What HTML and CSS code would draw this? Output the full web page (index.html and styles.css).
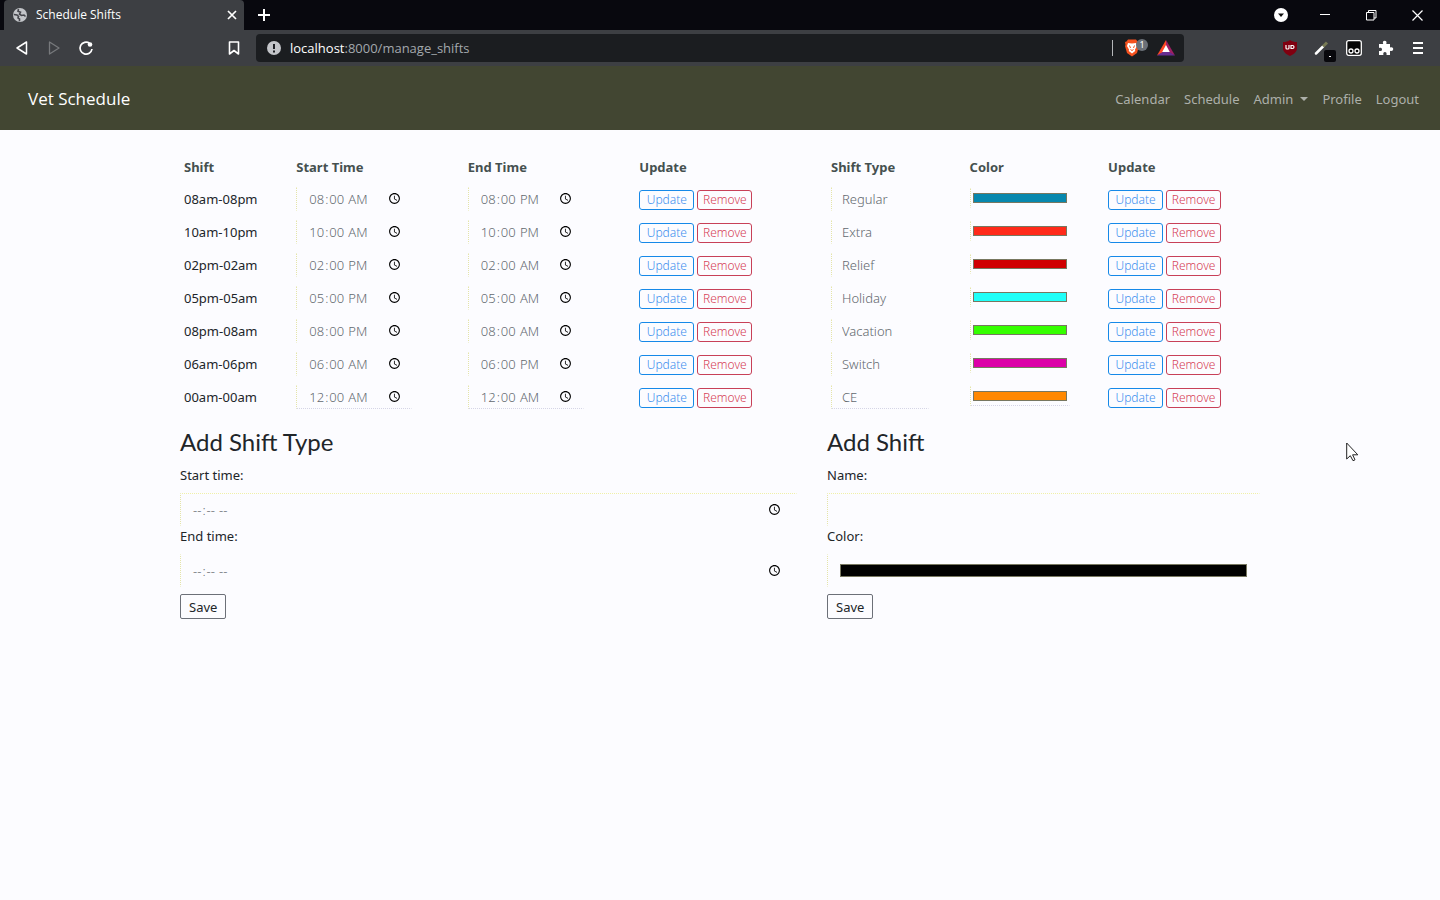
FILE: index.html
```html
<!DOCTYPE html>
<html lang="en">
<head>
<meta charset="utf-8">
<title>Schedule Shifts</title>
<link rel="stylesheet" href="styles.css">
</head>
<body>
<header class="browser">
  <div class="tabstrip">
    <div class="tab">
      <svg class="globe" width="14" height="14" viewBox="0 0 14 14"><circle cx="7" cy="7" r="7" fill="#c3c5c9"/><path d="M.8 6.500L4 7l1.500 1.500L5 10l1.500 1v2.200M5.500 1L5 3.200l2.500 1-1 2 2 1.300 2.500-.5 1.500 1.500" fill="none" stroke="#45464c" stroke-width="1.600"/></svg>
      <span class="tab-title">Schedule Shifts</span>
      <button class="icon" aria-label="Close tab"><svg width="10" height="10" viewBox="0 0 10 10"><path d="M1 1l8 8M9 1L1 9" stroke="#fff" stroke-width="1.700"/></svg></button>
    </div>
    <button class="icon new-tab" aria-label="New tab"><svg width="12" height="12" viewBox="0 0 12 12"><path d="M6 0v12M0 6h12" stroke="#fff" stroke-width="2"/></svg></button>
    <div class="window-controls">
      <button class="icon" aria-label="Search tabs"><svg width="14" height="14" viewBox="0 0 14 14"><circle cx="7" cy="7" r="7" fill="#fff"/><path d="M4 5.500h6L7 9z" fill="#111"/></svg></button>
      <button class="icon" aria-label="Minimize"><svg width="10" height="10" viewBox="0 0 10 10"><path d="M0 4.500h10" stroke="#fff"/></svg></button>
      <button class="icon" aria-label="Restore"><svg width="11" height="11" viewBox="0 0 11 11"><path d="M.5 2.500h7.500v7.500H.5zM2.500 2.500V.5h7.500v7.500H8" fill="none" stroke="#fff"/></svg></button>
      <button class="icon" aria-label="Close"><svg width="11" height="11" viewBox="0 0 11 11"><path d="M.5 .5l10 10M10.500 .5l-10 10" stroke="#fff" stroke-width="1.200"/></svg></button>
    </div>
  </div>
  <div class="toolbar">
    <div class="toolbar-left">
      <button class="icon" aria-label="Back"><svg width="14" height="16" viewBox="0 0 14 16"><path d="M11.500 2v12L2 8z" fill="none" stroke="#fff" stroke-width="1.500" stroke-linejoin="round"/></svg></button>
      <button class="icon" aria-label="Forward"><svg width="14" height="16" viewBox="0 0 14 16"><path d="M2.500 2v12L12 8z" fill="none" stroke="#77797c" stroke-width="1.300" stroke-linejoin="round"/></svg></button>
      <button class="icon" aria-label="Reload"><svg width="16" height="16" viewBox="0 0 16 16"><path d="M14 9A6 6 0 1 1 11.500 3.200" fill="none" stroke="#fff" stroke-width="1.700"/><circle cx="12" cy="4.500" r="2.300" fill="#fff"/></svg></button>
      <button class="icon bookmark" aria-label="Bookmark"><svg width="12" height="16" viewBox="0 0 12 16"><path d="M1.500 2h9v12L6 10.500 1.500 14z" fill="none" stroke="#fff" stroke-width="1.600" stroke-linejoin="round"/></svg></button>
    </div>
    <div class="address">
      <svg width="14" height="14" viewBox="0 0 14 14"><circle cx="7" cy="7" r="7" fill="#c3c5c9"/><path d="M7 3v5M7 9.500v2" stroke="#1c1e22" stroke-width="2"/></svg>
      <span class="url"><b>localhost</b>:8000/manage_shifts</span>
      <span class="divider"></span>
      <span class="shield">
        <svg width="16" height="18" viewBox="0 0 16 18"><path d="M4 .5h8l1.500 2 1.500.5-.5 3 .5 1-2 7L8 17.500 3 14 1 7l.5-1L1 3l1.500-.5z" fill="#f5511e"/><path d="M4 4l4 .6L12 4l1 3-2 3.500.2 1.500L8 14.500 4.800 12 5 10.500 3 7z" fill="#fff"/><path d="M5.500 6.500L6.500 9M10.500 6.500L9.500 9M6.500 10.500L8 11.500l1.500-1" stroke="#f5511e" fill="none"/></svg>
        <span class="count">1</span>
      </span>
      <svg width="18" height="16" viewBox="0 0 18 16"><path d="M9 0L0 15.500l9-4.500z" fill="#ff4724"/><path d="M9 0l9 15.500L9 11z" fill="#9e1f63"/><path d="M0 15.500h18L9 10z" fill="#662d91"/><path d="M9 5l3.800 7H5.200z" fill="#fff"/></svg>
    </div>
    <div class="toolbar-right">
      <button class="icon" aria-label="Blocker"><svg width="14" height="16" viewBox="0 0 14 16"><path d="M7 0c2 1.500 4 2 7 2v6c0 4-3 6-7 8-4-2-7-4-7-8V2c3 0 5-.5 7-2z" fill="#800010"/><path d="M3 5v3q0 1 1 1h1q1 0 1-1V5M8 5.500v3h1.500q1.500 0 1.500-1.500T9.500 5.500z" fill="none" stroke="#fff" stroke-width="1.200"/></svg></button>
      <button class="icon picker" aria-label="Color picker"><svg width="16" height="16" viewBox="0 0 16 16"><path d="M2 13.500L9 6.500" stroke="#fff" stroke-width="2.500" stroke-linecap="round"/><path d="M9 6.500l4-4" stroke="#777a55" stroke-width="3"/></svg><span class="picker-badge"></span></button>
      <button class="icon" aria-label="Extension"><svg width="16" height="16" viewBox="0 0 16 16"><rect x=".7" y=".7" width="14.600" height="14.600" rx="2" fill="#060606" stroke="#fff" stroke-width="1.300"/><g fill="none" stroke="#fff" stroke-width="1.300"><circle cx="5" cy="11" r="2"/><circle cx="11" cy="11" r="2"/></g></svg></button>
      <button class="icon" aria-label="Extensions"><svg width="16" height="16" viewBox="0 0 16 16"><path d="M1 4h4.200C4.300 1.900 5.300.8 6.700.8S9 2 8.300 4H12v3.500c2-.8 3.200 0 3.200 1.500S14 11.400 12 10.700V15H8.500c.5-2-.3-3-1.600-3S5 13 5.400 15H1v-4c2 .4 3-.4 3-1.600S3 7.500 1 8z" fill="#fff"/></svg></button>
      <button class="icon" aria-label="Menu"><svg width="10" height="12" viewBox="0 0 10 12"><path d="M0 1h10M0 6h10M0 11h10" stroke="#fff" stroke-width="2"/></svg></button>
    </div>
  </div>
</header>
<nav class="navbar">
  <a class="brand" href="#">Vet Schedule</a>
  <div class="links">
    <a href="#">Calendar</a><a href="#">Schedule</a><a class="dropdown" href="#">Admin</a><a href="#">Profile</a><a href="#">Logout</a>
  </div>
</nav>
<main class="container">
  <section class="times">
    <table>
      <colgroup><col class="c-shift"><col class="c-start"><col class="c-end"><col class="c-act"></colgroup>
      <thead><tr><th>Shift</th><th>Start Time</th><th>End Time</th><th>Update</th></tr></thead>
      <tbody>
        <tr><td>08am-08pm</td><td><input aria-label="Start time" type="time" value="08:00"></td><td><input aria-label="End time" type="time" value="20:00"></td><td><div class="actions"><button class="btn update">Update</button><button class="btn remove">Remove</button></div></td></tr>
        <tr><td>10am-10pm</td><td><input aria-label="Start time" type="time" value="10:00"></td><td><input aria-label="End time" type="time" value="22:00"></td><td><div class="actions"><button class="btn update">Update</button><button class="btn remove">Remove</button></div></td></tr>
        <tr><td>02pm-02am</td><td><input aria-label="Start time" type="time" value="14:00"></td><td><input aria-label="End time" type="time" value="02:00"></td><td><div class="actions"><button class="btn update">Update</button><button class="btn remove">Remove</button></div></td></tr>
        <tr><td>05pm-05am</td><td><input aria-label="Start time" type="time" value="17:00"></td><td><input aria-label="End time" type="time" value="05:00"></td><td><div class="actions"><button class="btn update">Update</button><button class="btn remove">Remove</button></div></td></tr>
        <tr><td>08pm-08am</td><td><input aria-label="Start time" type="time" value="20:00"></td><td><input aria-label="End time" type="time" value="08:00"></td><td><div class="actions"><button class="btn update">Update</button><button class="btn remove">Remove</button></div></td></tr>
        <tr><td>06am-06pm</td><td><input aria-label="Start time" type="time" value="06:00"></td><td><input aria-label="End time" type="time" value="18:00"></td><td><div class="actions"><button class="btn update">Update</button><button class="btn remove">Remove</button></div></td></tr>
        <tr><td>00am-00am</td><td><input aria-label="Start time" type="time" value="00:00"></td><td><input aria-label="End time" type="time" value="00:00"></td><td><div class="actions"><button class="btn update">Update</button><button class="btn remove">Remove</button></div></td></tr>
      </tbody>
    </table>
    <form>
      <h2>Add Shift Type</h2>
      <label for="start">Start time:</label>
      <input id="start" type="time">
      <label for="end">End time:</label>
      <input id="end" type="time">
      <button class="save" type="button">Save</button>
    </form>
  </section>
  <section class="types">
    <table>
      <colgroup><col class="c-third"><col class="c-third"><col></colgroup>
      <thead><tr><th>Shift Type</th><th>Color</th><th>Update</th></tr></thead>
      <tbody>
        <tr><td><input aria-label="Shift type" type="text" value="Regular"></td><td><input aria-label="Color" type="color" value="#0788ae"></td><td><div class="actions"><button class="btn update">Update</button><button class="btn remove">Remove</button></div></td></tr>
        <tr><td><input aria-label="Shift type" type="text" value="Extra"></td><td><input aria-label="Color" type="color" value="#ff2a1a"></td><td><div class="actions"><button class="btn update">Update</button><button class="btn remove">Remove</button></div></td></tr>
        <tr><td><input aria-label="Shift type" type="text" value="Relief"></td><td><input aria-label="Color" type="color" value="#d00000"></td><td><div class="actions"><button class="btn update">Update</button><button class="btn remove">Remove</button></div></td></tr>
        <tr><td><input aria-label="Shift type" type="text" value="Holiday"></td><td><input aria-label="Color" type="color" value="#20fff8"></td><td><div class="actions"><button class="btn update">Update</button><button class="btn remove">Remove</button></div></td></tr>
        <tr><td><input aria-label="Shift type" type="text" value="Vacation"></td><td><input aria-label="Color" type="color" value="#35ff00"></td><td><div class="actions"><button class="btn update">Update</button><button class="btn remove">Remove</button></div></td></tr>
        <tr><td><input aria-label="Shift type" type="text" value="Switch"></td><td><input aria-label="Color" type="color" value="#dc00a8"></td><td><div class="actions"><button class="btn update">Update</button><button class="btn remove">Remove</button></div></td></tr>
        <tr><td><input aria-label="Shift type" type="text" value="CE"></td><td><input aria-label="Color" type="color" value="#ff8800"></td><td><div class="actions"><button class="btn update">Update</button><button class="btn remove">Remove</button></div></td></tr>
      </tbody>
    </table>
    <form>
      <h2>Add Shift</h2>
      <label for="name">Name:</label>
      <input id="name" type="text">
      <label for="color">Color:</label>
      <input id="color" type="color" value="#000000">
      <button class="save" type="button">Save</button>
    </form>
  </section>
</main>
<svg class="cursor" width="13" height="20" viewBox="0 0 13 20"><path d="M.7 1v16l3.600-3.300 2.700 5 2-.9-2.400-5h5.200z" fill="#fff" stroke="#222" stroke-width="1"/></svg>
</body>
</html>
```
FILE: styles.css
```css
* { box-sizing: border-box; }
body {
  margin: 0;
  min-height: 100vh;
  background: #fcfcff;
  color: #212529;
  font: 13px/20px "Noto Sans", "Open Sans", sans-serif;
}
button, input { font: inherit; }
a { color: inherit; text-decoration: none; }
svg { display: block; flex: none; }
.icon {
  display: flex;
  align-items: center;
  justify-content: center;
  padding: 0;
  border: 0;
  background: none;
}

.tabstrip {
  display: flex;
  align-items: center;
  height: 30px;
  padding-left: 4px;
  background: #08080e;
}
.tab {
  display: flex;
  align-items: center;
  gap: 9px;
  width: 240px;
  height: 30px;
  padding: 0 7px 0 9px;
  border-radius: 4px 4px 0 0;
  background: #3d3f43;
}
.tab-title {
  flex: 1;
  color: #fff;
  font-family: "Open Sans", sans-serif;
  font-size: 12px;
  font-weight: 500;
}
.new-tab { margin-left: 14px; }
.window-controls { display: flex; margin-left: auto; }
.window-controls .icon { width: 46px; height: 30px; }
.window-controls .icon:first-child { width: 42px; }

.toolbar {
  display: flex;
  align-items: center;
  height: 36px;
  background: #3d3f43;
}
.toolbar-left, .toolbar-right {
  display: flex;
  align-items: center;
  width: 256px;
}
.toolbar-left { padding: 0 6px; }
.toolbar .icon { width: 32px; height: 32px; }
.toolbar .bookmark { margin-left: auto; }
.toolbar-right { justify-content: flex-end; padding-right: 6px; }
.picker { position: relative; }
.picker-badge {
  position: absolute;
  right: 2px;
  bottom: 2px;
  width: 12px;
  height: 12px;
  border-radius: 2px;
  background: #08080c;
}
.picker-badge::after {
  content: "";
  position: absolute;
  left: 5px;
  top: 6px;
  width: 2px;
  height: 1px;
  background: #fff;
}
.address {
  display: flex;
  flex: 1;
  align-items: center;
  gap: 9px;
  height: 28px;
  padding: 0 9px 0 11px;
  border-radius: 4px;
  background: #1b1d20;
}
.url { flex: 1; color: #a3a8ad; font-family: "Open Sans", sans-serif; }
.url b { color: #fff; font-weight: 500; }
.divider { width: 1px; height: 16px; background: #b5b7ba; }
.shield { position: relative; width: 26px; padding-left: 2px; }
.count {
  position: absolute;
  right: 0;
  top: 0;
  width: 12px;
  height: 12px;
  border-radius: 6px;
  background: #6b7078;
  color: #fff;
  font-size: 9px;
  line-height: 12px;
  text-align: center;
}

.navbar {
  display: flex;
  align-items: center;
  justify-content: space-between;
  height: 64px;
  padding: 2px 21px 0 28px;
  background: #424632;
}
.brand { color: #fff; font: 17px/24px "Open Sans", sans-serif; }
.links { display: flex; gap: 14px; color: #adb0aa; }
.dropdown { display: flex; align-items: center; gap: 7px; }
.dropdown::after {
  content: "";
  border: 4px solid transparent;
  border-top-color: currentColor;
  border-bottom: 0;
}

.container {
  display: grid;
  grid-template-columns: 617fr 433fr;
  gap: 30px;
  max-width: 1110px;
  margin: 0 auto;
  padding: 21px 15px;
}
table { width: 100%; border-collapse: collapse; table-layout: fixed; }
.c-shift { width: 18.2%; }
.c-start, .c-end { width: 27.8%; }
.c-third { width: 32%; }
th, td { height: 33px; padding: 0 4px; text-align: left; }
th { height: 31px; color: #45504f; font-weight: 700; }
td input { display: block; height: 24px; }
input {
  border: 1px dotted transparent;
  border-left-color: #e4e4a8;
  background: none;
  padding: 0 12px;
  color: #62686e;
}
input[type="time"] { padding: 0 11px; font-weight: 300; }
td input[type="time"] { width: 116px; padding-right: 7px; }
td input[type="text"] { width: 98px; padding: 0 10px; font-weight: 300; }
td input[type="color"] { width: 100px; height: 20px; margin-bottom: 2px; padding: 0; }
input::-webkit-color-swatch-wrapper { padding: 4px 2px; }
input::-webkit-color-swatch { border: 1px solid #777760; }
tbody tr:last-child input { border-bottom-color: #d5d5e6; }
.actions { display: flex; gap: 3px; padding-top: 3px; }
.btn {
  width: 55px;
  height: 20px;
  padding: 0;
  border: 1px solid;
  border-radius: 3px;
  background: none;
  font-size: 12px;
  line-height: 16px;
  font-weight: 300;
}
.update { border-color: #1689e8; color: #3c8fee; }
.remove { border-color: #c84058; color: #d64055; }

form { display: flex; flex-direction: column; align-items: flex-start; }
h2 {
  margin: 14px 0 8px;
  font: 400 24px/30px Lato, sans-serif;
}
label { margin: 0 0 8px; line-height: 20px; }
form input { width: 100%; height: 33px; }
form input[type="color"] { padding: 5px 10px; }
#start, #name { border-top-color: #f0f0a8; }
.save {
  height: 25px;
  margin-top: 7px;
  padding: 0 8px;
  border: 1px solid #6c7078;
  border-radius: 2px;
  background: none;
  color: #212529;
}
.cursor { position: absolute; left: 1346px; top: 442px; }
```
